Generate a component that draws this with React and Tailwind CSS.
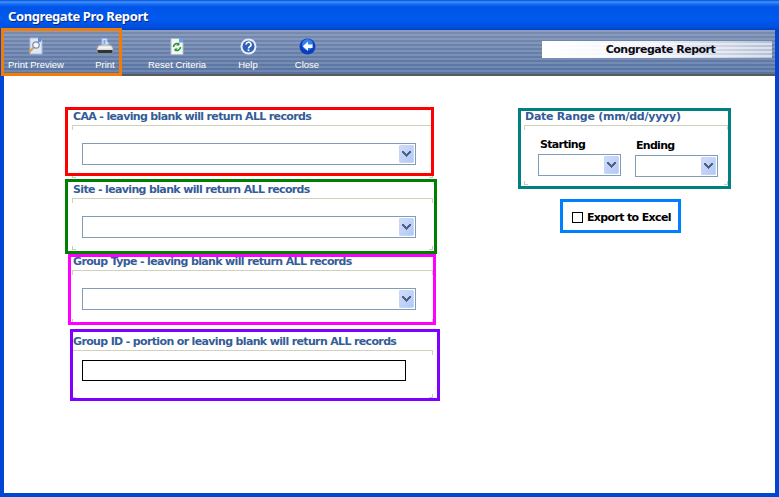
import React from "react";

const ui = { fontFamily: '"DejaVu Sans", sans-serif' };

function Chevron() {
  return (
    <svg width="11" height="8" viewBox="0 0 11 8" shapeRendering="crispEdges">
      <path d="M1 1h2v1h1v1h1v1h1V3h1V2h1V1h2v2H9v1H8v1H7v1H6v1H5V6H4V5H3V4H2V3H1z" fill="#4d6185" />
    </svg>
  );
}

function Select({ className }) {
  return (
    <div className={"box-border flex h-[22px] items-center justify-end border border-[#7f9db9] bg-white pr-[1px] " + className}>
      <div className="flex h-[18px] w-[15px] items-center justify-center rounded-[1px] border border-[#c8d6f4] bg-gradient-to-br from-[#cfdcfb] to-[#b2c8f6]">
        <Chevron />
      </div>
    </div>
  );
}

function Fieldset({ className, ticks = true, children }) {
  return (
    <div className={"relative box-border w-[361px] border-t border-[#d0d0bf] " + className}>
      <div className="absolute left-0 top-0 h-[4px] w-px bg-[#d0d0bf]" />
      <div className="absolute right-0 top-0 h-[4px] w-px bg-[#d0d0bf]" />
      {ticks && <div className="absolute bottom-0 left-0 h-[4px] w-[4px] border-b border-l border-[#c8c8c8]" />}
      {ticks && <div className="absolute bottom-0 right-0 h-[4px] w-[4px] border-b border-r border-[#c8c8c8]" />}
      {children}
    </div>
  );
}

function Legend({ className = "tracking-[-0.65px]", children }) {
  return (
    <div className={"h-[18px] whitespace-nowrap pl-px pt-px text-[11px] font-bold leading-[18px] text-[#345c97] " + className} style={ui}>
      {children}
    </div>
  );
}

function Tool({ label, className, children }) {
  return (
    <div className={"flex w-[64px] flex-col items-center " + className}>
      <div className="flex h-[20px] items-center justify-center">{children}</div>
      <span className="mt-[3px] whitespace-nowrap text-[9.5px] leading-[12px] text-white" style={{ fontFamily: '"Liberation Sans", sans-serif' }}>
        {label}
      </span>
    </div>
  );
}

function PreviewIcon() {
  return (
    <svg width="16" height="18" viewBox="0 0 16 18">
      <path d="M2 1h9l3 3v13H2z" fill="#dfe8f8" stroke="#a8b8d8" />
      <path d="M10 1h3v4h-3z" fill="#5f8fd8" />
      <circle cx="8" cy="8" r="3.2" fill="#f4f7ff" stroke="#7a8aa8" strokeWidth="1.2" />
      <path d="M5.5 10.5L1.5 15" stroke="#e0a040" strokeWidth="2" />
    </svg>
  );
}

function PrinterIcon() {
  return (
    <svg width="18" height="17" viewBox="0 0 18 17">
      <path d="M6 0.5h5v3l2 2-2 2H6z" fill="#d6e6ff" stroke="#9dbcec" />
      <path d="M7.5 2h2v4h-2z" fill="#7fa8e8" />
      <path d="M1 10.5Q1 7.5 4 7h10q3 .5 3 3.5V13Q17 15 15 15H3Q1 15 1 13z" fill="#dcdcdc" stroke="#9a9a9a" strokeWidth=".8" />
      <path d="M3.5 8.5h11l1.5 2H2z" fill="#f5f5f5" />
      <path d="M1.5 12h15v1.5q0 1.5-1.5 1.5H3q-1.500 0-1.500-1.500z" fill="#333" />
    </svg>
  );
}

function ResetIcon() {
  return (
    <svg width="14" height="17" viewBox="0 0 14 17">
      <path d="M1 0.5h8l4 4v12H1z" fill="#f4f7f4" stroke="#b0bcd0" />
      <path d="M9 0.5h4v4H9z" fill="#6d9ee0" />
      <path d="M3.5 9a3.5 3.5 0 0 1 6-2.4" fill="none" stroke="#1f9a2c" strokeWidth="1.6" />
      <path d="M10.5 9a3.5 3.5 0 0 1-6 2.4" fill="none" stroke="#1f9a2c" strokeWidth="1.6" />
      <path d="M9 4.5v3h-3zM5 13.5v-3h3z" fill="#1f9a2c" />
    </svg>
  );
}

function HelpIcon() {
  return (
    <svg width="17" height="17" viewBox="0 0 17 17">
      <circle cx="8.5" cy="8.5" r="8" fill="#e8eef8" />
      <circle cx="8.5" cy="8.5" r="6" fill="#2f5fb8" />
      <path d="M6.2 6.6a2.4 2.4 0 1 1 3.6 2c-.9.5-1.3.9-1.3 1.8" fill="none" stroke="#fff" strokeWidth="1.6" />
      <rect x="7.6" y="11.4" width="1.8" height="1.8" fill="#fff" />
    </svg>
  );
}

function CloseIcon() {
  return (
    <svg width="17" height="17" viewBox="0 0 17 17">
      <circle cx="8.5" cy="8.5" r="8" fill="#0b3fc0" />
      <circle cx="8.5" cy="6.5" r="5.5" fill="#2f7ff0" />
      <path d="M9 3.5v3h4.5v3.5H9v3L3.8 8.3z" fill="#fff" />
    </svg>
  );
}

export default function App() {
  return (
    <div className="relative flex h-[497px] w-[779px] flex-col overflow-hidden bg-[#0046d5]" style={ui}>
      {/* Title bar */}
      <div className="flex h-[30px] shrink-0 items-center bg-[linear-gradient(180deg,#0a4fd6_0px,#3c95ff_2px,#1a6cf5_4px,#0055e8_7px,#0059ee_20px,#0050e0_27px,#0043c4_30px)] pl-[8px] pt-[4px] text-[13px] font-bold tracking-[-0.4px] text-white">
        <span className="whitespace-nowrap [text-shadow:1px_1px_0_#0a2a80]" style={{ fontFamily: '"Noto Sans", sans-serif' }}>Congregate Pro Report</span>
      </div>

      {/* Body between the window's side borders */}
      <div className="mx-[4px] mb-[4px] flex min-h-0 flex-1 flex-col bg-white">
        {/* Toolbar */}
        <div className="flex h-[44px] shrink-0 items-start bg-[repeating-linear-gradient(180deg,rgba(255,255,255,0.1)_0px,rgba(255,255,255,0.1)_2px,rgba(0,0,0,0.05)_2px,rgba(0,0,0,0.05)_4px),linear-gradient(180deg,#7f93b8,#5c78a8)] pt-[6px]">
          <Tool label="Print Preview" className="ml-0"><PreviewIcon /></Tool>
          <Tool label="Print" className="ml-[5px]"><PrinterIcon /></Tool>
          <Tool label="Reset Criteria" className="ml-[8px]"><ResetIcon /></Tool>
          <Tool label="Help" className="ml-[7px]"><HelpIcon /></Tool>
          <Tool label="Close" className="ml-[-5px]"><CloseIcon /></Tool>
          <div className="ml-auto mr-[3px] mt-[5px] flex h-[17px] w-[230px] items-center justify-center bg-[repeating-linear-gradient(180deg,rgba(255,255,255,0)_0px,rgba(255,255,255,0)_2px,rgba(255,255,255,0.5)_2px,rgba(255,255,255,0.5)_4px),linear-gradient(90deg,#ffffff,#eef1f7_50%,#b4c0d6)] pl-[7px] text-[11px] font-bold leading-[17px] tracking-[-0.5px] text-[#0a0a14]">
            Congregate Report
          </div>
        </div>
        <div className="h-[2px] shrink-0 bg-[#5a5a5a]" />

        {/* Form */}
        <div className="flex flex-1 items-start pt-[31px]">
          <div className="ml-[68px] w-[361px]">
            <Legend>CAA - leaving blank will return ALL records</Legend>
            <Fieldset className="mb-[2px] h-[53px] pl-[10px] pt-[17px]"><Select className="w-[334px]" /></Fieldset>
            <Legend>Site - leaving blank will return ALL records</Legend>
            <Fieldset className="mb-[2px] h-[52px] pl-[10px] pt-[17px]"><Select className="w-[334px]" /></Fieldset>
            <Legend>Group Type - leaving blank will return ALL records</Legend>
            <Fieldset className="mb-[9px] h-[53px] pl-[10px] pt-[17px]"><Select className="w-[334px]" /></Fieldset>
            <Legend>Group ID - portion or leaving blank will return ALL records</Legend>
            <Fieldset className="h-[48px] pl-[10px] pt-[9px]">
              <div className="box-border h-[21px] w-[324px] border border-black bg-white" />
            </Fieldset>
          </div>

          <div className="ml-[91px] w-[204px]">
            <Legend className="tracking-[-0.25px]">Date Range (mm/dd/yyyy)</Legend>
            <Fieldset className="!w-[204px] h-[60px] pl-[14px]" >
              <div className="flex gap-[14px]">
                <div className="w-[83px] pt-[10px]">
                  <div className="h-[18px] pl-[2px] pt-px text-[11px] font-bold leading-[16px] tracking-[-0.7px] text-black">Starting</div>
                  <Select className="w-[83px]" />
                </div>
                <div className="w-[83px] pt-[11px]">
                  <div className="h-[18px] pl-[1px] pt-px text-[11px] font-bold leading-[16px] tracking-[-0.7px] text-black">Ending</div>
                  <Select className="w-[83px]" />
                </div>
              </div>
            </Fieldset>
            <div className="ml-[48px] mt-[27px] flex h-[11px] items-center gap-[4px]">
              <div className="box-border h-[11px] w-[11px] border border-black bg-white" />
              <span className="whitespace-nowrap pt-[2px] text-[11px] font-bold tracking-[-0.65px] text-black">Export to Excel</span>
            </div>
          </div>
        </div>
      </div>

      {/* Annotation rectangles drawn over the screenshot */}
      <div className="pointer-events-none absolute left-[1px] top-[28px] box-border h-[48px] w-[121px] border-[3px] border-[#f57c00]" />
      <div className="pointer-events-none absolute left-[65px] top-[107px] box-border h-[69px] w-[369px] border-[3px] border-[#ff0000]" />
      <div className="pointer-events-none absolute left-[65px] top-[179px] box-border h-[75px] w-[372px] border-[3px] border-[#008000]" />
      <div className="pointer-events-none absolute left-[68px] top-[254px] box-border h-[71px] w-[368px] border-[3px] border-[#ff00ff]" />
      <div className="pointer-events-none absolute left-[70px] top-[329px] box-border h-[72px] w-[370px] border-[3px] border-[#8000ff]" />
      <div className="pointer-events-none absolute left-[518px] top-[108px] box-border h-[81px] w-[213px] border-[3px] border-[#008080]" />
      <div className="pointer-events-none absolute left-[560px] top-[199px] box-border h-[34px] w-[121px] border-[3px] border-[#0080ff]" />
    </div>
  );
}
